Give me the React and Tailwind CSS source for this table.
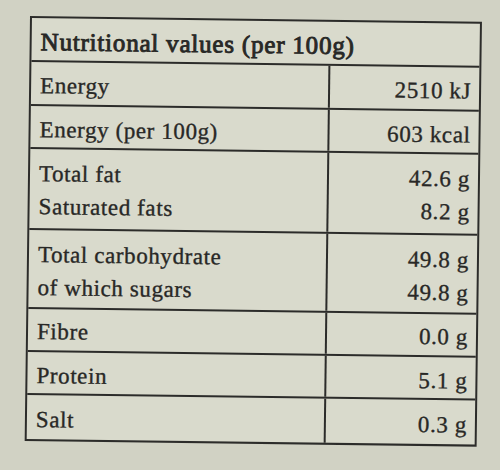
export default function App() {
  const rows = [
    { h: "h-[44px]", pt: "pt-[7px]", left: ["Energy"], right: ["2510 kJ"] },
    { h: "h-[43px]", pt: "pt-[7px]", left: ["Energy (per 100g)"], right: ["603 kcal"] },
    { h: "h-[81px]", pt: "pt-[8px]", left: ["Total fat", "Saturated fats"], right: ["42.6 g", "8.2 g"] },
    { h: "h-[79px]", pt: "pt-[8px]", left: ["Total carbohydrate", "of which sugars"], right: ["49.8 g", "49.8 g"] },
    { h: "h-[43px]", pt: "pt-[6px]", left: ["Fibre"], right: ["0.0 g"] },
    { h: "h-[43px]", pt: "pt-[7px]", left: ["Protein"], right: ["5.1 g"] },
    { h: "h-[44px]", pt: "pt-[8px]", left: ["Salt"], right: ["0.3 g"] },
  ];
  return (
    <div
      className="w-[500px] h-[470px] overflow-hidden bg-[#d1d2c4] pt-[16px] pl-[30px] text-[#282826]"
      style={{ fontFamily: '"Liberation Serif", "Times New Roman", serif' }}
    >
      <div className="w-[452px] border-2 border-[#2c2c2a] bg-[#d9dacc] origin-top-left rotate-[0.72deg]">
        <div className="h-[44px] border-b-2 border-[#2c2c2a] pl-[9px] pt-[7px] text-[25px] leading-[33px] tracking-[0.8px] [-webkit-text-stroke:0.9px_#282826]">
          Nutritional values (per 100g)
        </div>
        {rows.map((r, i) => (
          <div
            key={i}
            className={`flex ${r.h} ${i < rows.length - 1 ? "border-b-2" : ""} border-[#2c2c2a] text-[23px] leading-[33px] tracking-[0.6px] [-webkit-text-stroke:0.35px_#282826]`}
          >
            <div className={`w-[299px] border-r-2 border-[#2c2c2a] pl-[9px] ${r.pt}`}>
              {r.left.map((t, j) => (
                <div key={j}>{t}</div>
              ))}
            </div>
            <div className={`flex-1 pr-[8px] text-right ${r.pt}`}>
              {r.right.map((t, j) => (
                <div key={j}>{t}</div>
              ))}
            </div>
          </div>
        ))}
      </div>
    </div>
  );
}
